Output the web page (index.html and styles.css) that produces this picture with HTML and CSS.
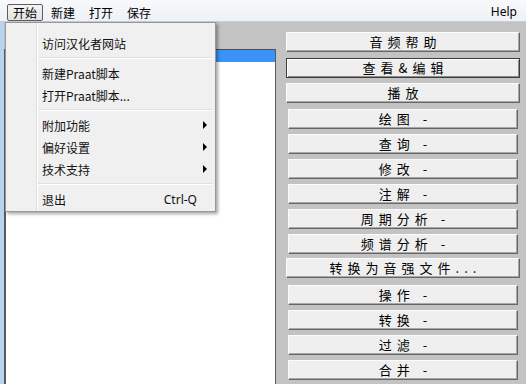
FILE: index.html
```html
<!DOCTYPE html>
<html lang="zh">
<head>
<meta charset="utf-8">
<title>Praat</title>
<link rel="stylesheet" href="styles.css">
</head>
<body>
<div class="app">
  <div class="menubar">
    <span class="mb-item active">开始</span>
    <span class="mb-item">新建</span>
    <span class="mb-item">打开</span>
    <span class="mb-item">保存</span>
    <span class="mb-spacer"></span>
    <span class="mb-item help">Help</span>
  </div>
  <div class="main">
    <div class="frame-strip"></div>
    <div class="left">
      <div class="list">
        <div class="list-row selected"></div>
      </div>
    </div>
    <div class="buttons">
      <div class="btn">音频帮助</div>
      <div class="btn default mt6">查看&amp;编辑</div>
      <div class="btn">播放</div>
      <div class="btn narrow mt6">绘图 -</div>
      <div class="btn narrow">查询 -</div>
      <div class="btn narrow">修改 -</div>
      <div class="btn narrow">注解 -</div>
      <div class="btn narrow">周期分析 -</div>
      <div class="btn narrow">频谱分析 -</div>
      <div class="btn mt4">转换为音强文件...</div>
      <div class="btn narrow mt7">操作 -</div>
      <div class="btn narrow">转换 -</div>
      <div class="btn narrow">过滤 -</div>
      <div class="btn narrow">合并 -</div>
    </div>
  </div>
  <div class="dropdown">
    <div class="mi"><span>访问汉化者网站</span></div>
    <div class="sep"></div>
    <div class="mi"><span>新建Praat脚本</span></div>
    <div class="mi"><span>打开Praat脚本...</span></div>
    <div class="sep"></div>
    <div class="mi"><span>附加功能</span><span class="arrow"></span></div>
    <div class="mi"><span>偏好设置</span><span class="arrow"></span></div>
    <div class="mi"><span>技术支持</span><span class="arrow"></span></div>
    <div class="sep"></div>
    <div class="mi has-sc"><span>退出</span><span class="sc">Ctrl-Q</span></div>
  </div>
</div>
</body>
</html>
```
FILE: styles.css
```css
html, body {
  margin: 0;
  padding: 0;
}
body {
  width: 526px;
  height: 384px;
  overflow: hidden;
  font-family: "Noto Sans CJK SC", "Noto Sans", sans-serif;
  color: #000;
}
.app {
  position: relative;
  width: 526px;
  height: 384px;
  background: #c3c3c3;
}
.menubar {
  height: 21px;
  display: flex;
  align-items: flex-end;
  padding: 0 8px 0 7px;
  background: linear-gradient(#f7f9fc, #eef1f5);
  border-bottom: 1px solid #c9ced6;
}
.mb-item {
  font-size: 12px;
  line-height: 15px;
  height: 15px;
  padding: 0 5px;
  margin-right: 2px;
  border: 1px solid transparent;
  border-radius: 2px;
}
.mb-item.active {
  border-color: #5e5e5e;
  background: linear-gradient(#f4f4f4, #e3e3e3);
}
.mb-spacer {
  flex: 1;
}
.mb-item.help {
  font-family: "Noto Sans", sans-serif;
  padding: 0;
  margin-right: 0;
  margin-bottom: 1px;
}
.main {
  display: flex;
  height: 362px;
}
.frame-strip {
  width: 4px;
  background: #b9d2ef;
}
.left {
  width: 272px;
  padding-top: 27px;
  box-sizing: border-box;
}
.list {
  height: 100%;
  box-sizing: border-box;
  background: #fff;
  border-top: 1px solid #4d4d4d;
  border-left: 2px solid #5a5a5a;
  border-right: 1px solid #5a5a5a;
}
.list-row.selected {
  height: 12px;
  background: #3a93fb;
}
.buttons {
  margin-left: 10px;
  width: 234px;
  padding-top: 10px;
  display: flex;
  flex-direction: column;
  gap: 5px;
}
.btn {
  height: 20px;
  box-sizing: border-box;
  background: #efefef;
  border: 1px solid;
  border-color: #fcfcfc #666 #666 #fcfcfc;
  box-shadow: inset -1px -1px 0 #a8a8a8;
  display: flex;
  align-items: center;
  justify-content: center;
  font-size: 13px;
  line-height: 18px;
  letter-spacing: 5px;
  padding-left: 5px;
  white-space: nowrap;
}
.btn.narrow {
  margin-left: 2px;
  margin-right: 2px;
}
.btn.default {
  border: 1px solid #3c3c3c;
  box-shadow: inset 1px 1px 0 #fff, inset -1px -1px 0 #8a8a8a;
}
.btn.mt6 {
  margin-top: 1px;
}
.btn.mt4 {
  margin-top: -1px;
}
.btn.mt7 {
  margin-top: 2px;
}
.dropdown {
  position: absolute;
  left: 5px;
  top: 22px;
  width: 211px;
  box-sizing: border-box;
  background: #f0f0f0;
  border: 1px solid #979797;
  box-shadow: 2px 2px 3px rgba(0, 0, 0, 0.35);
  padding: 9px 2px 1px 2px;
}
.dropdown::before {
  content: "";
  position: absolute;
  left: 30px;
  top: 0;
  bottom: 0;
  width: 1px;
  background: #e0e0e0;
  border-right: 1px solid #fff;
}
.mi {
  position: relative;
  display: flex;
  align-items: center;
  height: 22px;
  padding-left: 34px;
  padding-right: 6px;
  font-size: 12px;
  color: #111;
}
.mi.has-sc {
  padding-right: 16px;
}
.arrow {
  margin-left: auto;
  width: 0;
  height: 0;
  border-left: 4px solid #000;
  border-top: 4px solid transparent;
  border-bottom: 4px solid transparent;
}
.sc {
  margin-left: auto;
  font-family: "Noto Sans", sans-serif;
  font-size: 12px;
}
.sep {
  position: relative;
  height: 8px;
  margin-left: 30px;
  display: flex;
  align-items: center;
}
.sep::after {
  content: "";
  flex: 1;
  height: 1px;
  background: #e0e0e0;
  border-bottom: 1px solid #fff;
}
```
